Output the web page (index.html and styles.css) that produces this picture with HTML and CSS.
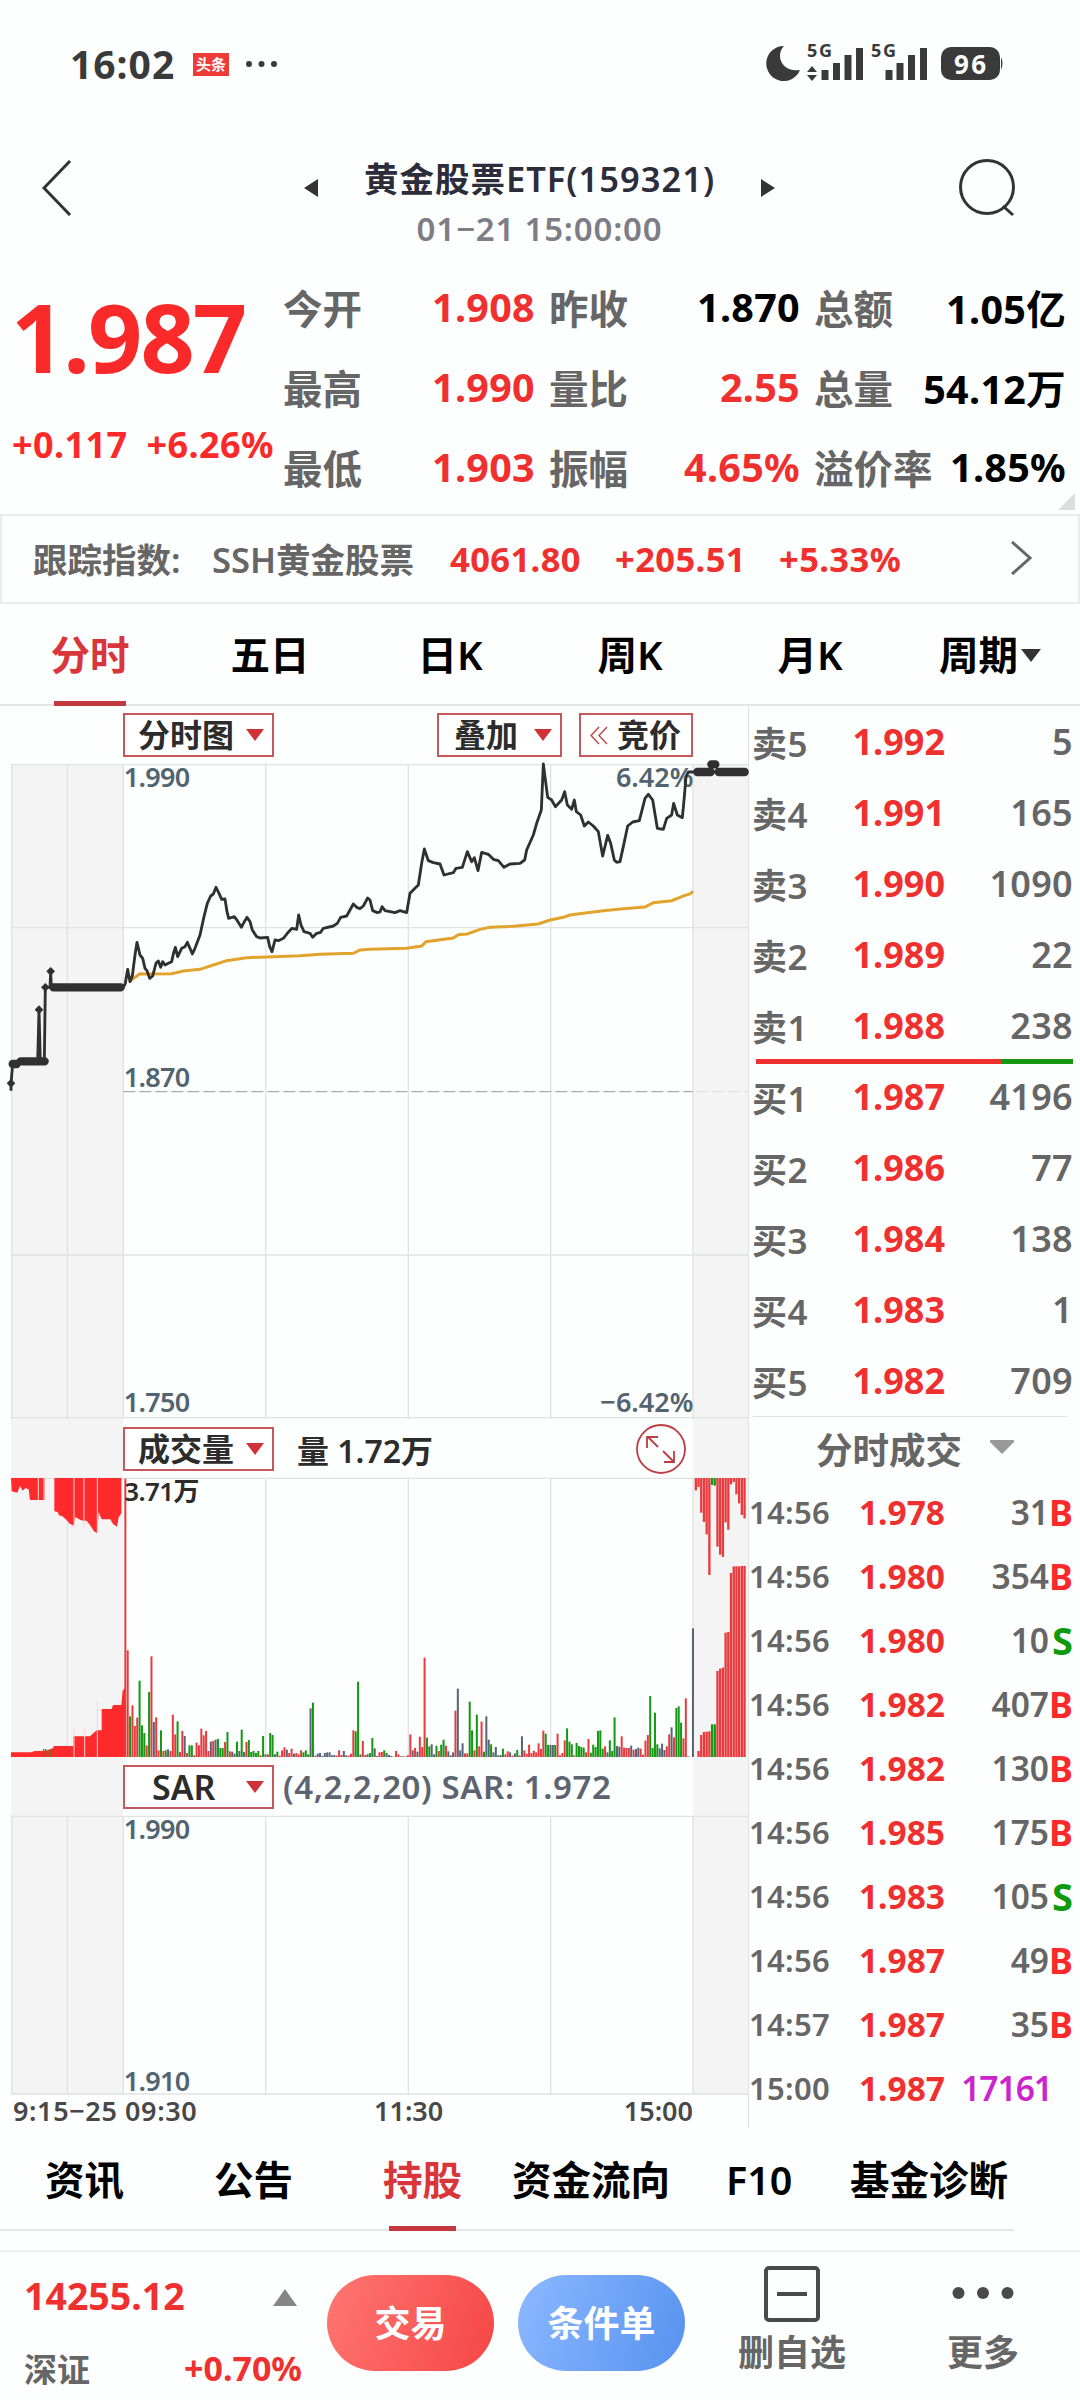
FILE: index.html
```html
<!doctype html>
<html lang="zh">
<head>
	<meta charset="UTF-8">
	<meta name="viewport" content="width=device-width, initial-scale=1.0">
	<title>黄金股票ETF(159321)</title>
	<link rel="stylesheet" href="styles.css">
</head>
<body>
<div class="status">
	<span class="time">16:02</span>
	<span class="app">头条</span>
	<svg class="more" width="32" height="8" viewBox="0 0 32 8"><circle cx="3" cy="4" r="3"/><circle cx="15.500" cy="4" r="3"/><circle cx="28" cy="4" r="3"/></svg>
	<svg class="sys" width="238" height="46" viewBox="766 36 238 46">
		<path d="M785 46a17.500 17.500 0 1 0 16 24c-11 2-20-5-20-14 0-4 1-7 4-10z"/>
		<text x="808" y="57" textLength="25">5G</text>
		<text x="872" y="57" textLength="25">5G</text>
		<path d="M813 66l5 6h-10zM813 81l5-6h-10z"/>
		<path class="bar" d="M826 80V70M837.500 80V63M849 80V55M860.500 80V48M890 80V70M901 80V63M912.500 80V55M924.500 80V48"/>
		<rect x="942" y="47" width="59" height="33" rx="10"/>
		<path d="M1002 57q3 6 0 13z"/>
		<text class="batt" x="955" y="73.500" textLength="32">96</text>
	</svg>
</div>

<div class="nav">
	<svg width="30" height="56" viewBox="0 0 30 56"><path d="M28 1L2 28l26 27"/></svg>
	<div class="title">
		<svg class="tri" width="14" height="18"><path d="M14 0v18L0 9z"/></svg>
		<div class="name">
			<h1>黄金股票ETF(159321)</h1>
			<p>01−21 15:00:00</p>
		</div>
		<svg class="tri" width="14" height="18"><path d="M0 0v18l14-9z"/></svg>
	</div>
	<svg width="58" height="58" viewBox="0 0 58 58"><circle cx="29" cy="28" r="26.500"/><path d="M45 47l10 9"/></svg>
</div>

<div class="quote">
	<div class="now">
		<p class="big">1.987</p>
		<p class="chg"><span>+0.117</span><span>+6.26%</span></p>
	</div>
	<div class="info">
		<div><b>今开</b><i class="red">1.908</i></div>
		<div><b>昨收</b><i>1.870</i></div>
		<div><b>总额</b><i>1.05亿</i></div>
		<div><b>最高</b><i class="red">1.990</i></div>
		<div><b>量比</b><i class="red">2.55</i></div>
		<div><b>总量</b><i>54.12万</i></div>
		<div><b>最低</b><i class="red">1.903</i></div>
		<div><b>振幅</b><i class="red">4.65%</i></div>
		<div><b>溢价率</b><i>1.85%</i></div>
	</div>
	<svg class="corner" width="17" height="17"><path d="M17 0v17H0z"/></svg>
</div>

<div class="index">
	<span class="lab">跟踪指数:</span>
	<span class="idx">SSH黄金股票</span>
	<span class="red v1">4061.80</span>
	<span class="red v2">+205.51</span>
	<span class="red v3">+5.33%</span>
	<svg width="22" height="34" viewBox="0 0 22 34"><path d="M2 1l18 16L2 33"/></svg>
</div>

<div class="tabs">
	<span class="on">分时</span>
	<span>五日</span>
	<span>日K</span>
	<span>周K</span>
	<span>月K</span>
	<span>周期<svg width="20" height="13"><path d="M0 0h20L10 13z"/></svg></span>
</div>

<div class="main">
	<div class="charts">
		<div class="bar top">
			<div class="btn w1">分时图<em></em></div>
			<div class="btn w2">叠加<em></em></div>
			<div class="btn w3"><svg width="18" height="19" viewBox="0 0 18 19"><path d="M9 1L1 9.500 9 18M17 1L9 9.500 17 18"/></svg>竞价</div>
		</div>
		<svg class="panel" id="price" width="738" height="655" viewBox="33 192 2214 1965">
			<path class="shade" d="M33 192h336v1965H33zM2079 192h165v1965h-165z"/>
			<path class="grid" d="M33 194h2211M33 683h2211M33 1665h2211M33 2153h2211M35 192v1965M202 192v1965M370 192v1965M797 192v1965M1225 192v1965M1652 192v1965M2079 192v1965"/>
			<path class="dash" d="M370 1175h1709"/>
			<path class="dash pale" d="M2090 1175h154"/>
			<text x="371" y="261">1.990</text>
			<text x="2080" y="261" class="end">6.42%</text>
			<text x="371" y="1161">1.870</text>
			<text x="371" y="2136">1.750</text>
			<text x="2080" y="2136" class="end">−6.42%</text>
			<polyline class="avg" points="390,842 405,832 420,821 440,822 515,821 550,813 600,808 640,795 680,782 740,773 820,770 900,767 960,763 1060,760 1080,750 1110,748 1220,745 1265,738 1278,725 1360,714 1375,704 1402,702 1440,688 1470,682 1540,679 1615,672 1650,660 1690,652 1710,645 1750,640 1810,632 1870,626 1935,621 1960,608 2015,602 2055,586 2070,582 2079,574"/>
			<polyline class="line" points="33,1172 33,1150 38,1092 50,1092 58,1084 113,1084 117,930 121,1084 133,1084 136,862 150,862 152,815 154,862 370,862 376,850 383,808 390,845 397,828 405,765 411,727 420,765 428,775 435,805 441,812 449,835 458,828 468,790 475,783 482,802 488,785 495,795 505,790 515,785 520,762 526,742 533,770 545,745 555,740 562,727 570,745 577,762 585,745 600,705 612,650 622,610 632,588 640,582 648,562 657,580 665,598 675,597 681,635 686,655 703,650 712,662 724,682 733,665 741,652 750,665 757,690 770,710 780,714 803,712 809,740 816,755 825,720 835,722 850,715 862,700 876,685 890,688 896,645 903,675 912,695 930,700 938,712 950,700 962,697 970,685 1000,678 1012,670 1022,652 1040,648 1060,612 1070,622 1080,626 1090,618 1103,594 1110,600 1118,632 1132,638 1140,636 1146,620 1155,632 1170,635 1185,638 1200,632 1220,638 1230,580 1245,565 1255,555 1265,490 1273,447 1285,482 1300,488 1320,492 1332,525 1360,518 1368,505 1387,502 1402,455 1415,485 1423,473 1434,512 1445,457 1465,463 1480,478 1495,482 1512,502 1530,492 1560,490 1574,480 1580,450 1600,405 1610,370 1624,330 1630,192 1643,292 1655,300 1666,320 1685,300 1694,275 1702,315 1715,328 1723,300 1729,335 1742,345 1753,378 1765,366 1780,378 1795,395 1808,468 1823,406 1832,430 1843,480 1850,487 1860,485 1872,430 1883,378 1898,366 1918,362 1935,295 1945,283 1958,300 1972,385 1990,388 2000,355 2015,345 2021,310 2032,345 2047,353 2053,290 2058,230 2065,216 2090,216"/>
			<path class="thick" d="M38 1092h12M62 1084h72M160 862h202M2092 216h40M2156 216h78M2134 193h12"/>
			<path class="dot" d="M33 1137l13 13-13 13-13-13zM117 916l13 13-13 13-13-13zM152 801l13 13-13 13-13-13zM136 849l13 13-13 13-13-13z"/>
		</svg>
		<div class="bar">
			<div class="btn w1">成交量<em></em></div>
			<span class="vol">量 1.72万</span>
			<svg class="zoom" width="50" height="50" viewBox="0 0 50 50"><circle cx="25" cy="25" r="24"/><path d="M22 23L12 13M11 24V13h11M27 27l11 11M28 38h10V27"/></svg>
		</div>
		<svg class="panel" id="volume" width="738" height="279" viewBox="33 0 2214 837">
			<path class="shade" d="M33 0h336v837H33zM2079 0h165v837h-165z"/>
			<path class="grid" d="M33 1h2211M202 0v837M797 0v837M1225 0v837M1652 0v837M2079 0v837"/>
			<path class="pre" d="M33 0h101v66h-44l-4-32-10-4-8 8-8-14-8 20-17-4zM163 0h201v106l-8 12-5 28-12-8-8-14-26 0-9-22-4 64-10-6-10-16-12-16h-10l-10-3-14-8-5 26-12-6-10-12-12-10-10-3-4-10-10-2z"/>
			<path class="pre" d="M33 837v-14h60l12-4h30l25-9 0-6h60v-29h50l8-8 12-10h15v-64h30l4-12h25l4-44 5-4 3-8v212z"/>
			<path class="gap" d="M115 0v70M132 0v70M222 0v150M252 0v150M292 0v165M222 750v87M254 750v87M292 670v167"/>
			<path class="pregreen" d="M131 813v24M137 813v24M152 813v24"/>
			<g id="bars"></g>
			<text x="373" y="68" class="dark">3.71万</text>
		</svg>
		<div class="bar">
			<div class="btn w1 sar">SAR<em></em></div>
			<span class="sarv">(4,2,2,20) SAR: 1.972</span>
		</div>
		<svg class="panel" width="738" height="279" viewBox="33 0 2214 837">
			<path class="shade" d="M33 0h336v837H33zM2079 0h165v837h-165z"/>
			<path class="grid" d="M33 1h2211M33 834h2211M35 0v837M202 0v837M370 0v837M797 0v837M1225 0v837M1652 0v837M2079 0v837"/>
			<text x="371" y="68">1.990</text>
			<text x="371" y="824">1.910</text>
		</svg>
		<div class="axis">
			<span>9:15−25 09:30</span>
			<span>11:30</span>
			<span>15:00</span>
		</div>
	</div>

	<div class="side">
		<div class="book" id="sell"></div>
		<div class="ratio"><div></div></div>
		<div class="book" id="buy"></div>
		<div class="dealhead">分时成交<svg width="24" height="14"><path d="M0 0h24v2L12 14 0 2z"/></svg></div>
		<div class="deals" id="deals"></div>
	</div>
</div>

<div class="subtabs">
	<span class="s1">资讯</span>
	<span class="s2">公告</span>
	<span class="s3 on">持股</span>
	<span class="s4">资金流向</span>
	<span class="s5">F10</span>
	<span class="s6">基金诊断</span>
</div>

<div class="foot">
	<div class="market">
		<div><span class="red pt">14255.12</span><svg width="24" height="17"><path d="M12 0l12 17H0z"/></svg></div>
		<div><span class="city">深证</span><span class="red pct">+0.70%</span></div>
	</div>
	<div class="pill trade">交易</div>
	<div class="pill cond">条件单</div>
	<div class="act">
		<svg width="56" height="56" viewBox="0 0 56 56"><rect x="2" y="2" width="52" height="52" rx="3"/><path d="M13 28h30"/></svg>
		<span>删自选</span>
	</div>
	<div class="act last">
		<svg width="62" height="56" viewBox="0 0 62 56"><circle cx="6.500" cy="27" r="6"/><circle cx="31" cy="27" r="6"/><circle cx="55.500" cy="27" r="6"/></svg>
		<span>更多</span>
	</div>
</div>

<script>
	// 每分钟成交量: 颜色 + 高度
	const vol = `r835 r320 g122 r155 r93 r118 g229 g95 g72 r35 g195 r302 b105 r119 r20 g80 r18 g20 b23 r18
	r127 r68 g107 r15 r78 b63 r12 g35 g35 r5 r43 r35 r85 r65 r78 r18 b46 r48 b52 g54
	g27 g27 r45 g75 r17 b16 b10 g46 b18 g82 b15 r45 g51 g15 g18 g12 g18 r5 g63 b8
	r8 g72 g66 b8 g16 r4 r20 r29 b22 r12 r25 b10 r12 r8 r20 g14 g20 g8 b146 g163
	r4 b10 b12 b3 b12 b14 b14 b5 b6 r4 r20 r6 b18 b5 r4 r10 r80 g77 g226 b8
	r48 r6 b8 g12 g57 b26 r3 r14 r15 g20 b12 b6 b3 r1 r18 r8 b2 b2 r2 r5
	r68 b20 r27 b16 r61 r30 r298 g58 g32 b38 b8 g34 r18 g37 g52 r34 b17 b5 b14 r139
	b205 b20 b41 r11 r11 g166 g80 r20 g127 r32 r106 g16 b122 b52 g38 b14 b30 b5 b6 g25
	r8 r17 b14 r4 b11 g21 r5 b62 r20 r10 r37 r12 r19 r14 r41 r24 r79 g70 g36 b36
	b36 g36 r70 r5 r12 r50 g86 g46 g38 r5 g42 g33 g30 g28 r14 r54 g13 g37 g30 g78
	g80 g25 r32 b14 g50 g18 g119 b33 b31 r62 r28 r27 r27 b34 r22 b24 b28 r25 r7 r49
	r66 g183 g27 g133 g38 b26 b40 b21 r32 r68 b89 r59 g147 g152 g103 r56 r176 b2 b0 b386`.split(/\s+/)
	// 收盘竞价
	const down = "r37 r27 r104 r132 r169 r291 g21 g23 r206 r230 r237 r133 r155 r19 r12 r49 r76 r111 r121".split(" ")
	const up = "r0 r18 r66 r75 r76 r77 g98 g98 r258 r265 r268 r373 r375 r552 r572 r572 r572 r573 r573".split(" ")

	function rect(v, x, fromTop, w) {
		let h = Number(v.slice(1))
		let y = fromTop ? 0 : 837 - h
		return `<rect class="${v[0]}" x="${x}" y="${y}" width="${w}" height="${h}"/>`
	}
	let out = ""
	vol.forEach((v, i) => out += rect(v, 373 + i * 7.125, false, 6))
	down.forEach((v, i) => out += rect(v, 2084 + i * 8.12, true, 7))
	up.forEach((v, i) => out += rect(v, 2084 + i * 8.12, false, 7))
	document.getElementById("bars").innerHTML = out

	function rows(id, list) {
		document.getElementById(id).innerHTML = list.map(r =>
			`<div><span>${r[0]}</span><span class="red">${r[1]}</span><span class="${r[4] || ""}">${r[2]}</span>${r[3] !== undefined ? `<b class="${r[3]}">${r[3]}</b>` : ""}</div>`
		).join("")
	}
	rows("sell", [["卖5", "1.992", 5], ["卖4", "1.991", 165], ["卖3", "1.990", 1090], ["卖2", "1.989", 22], ["卖1", "1.988", 238]])
	rows("buy", [["买1", "1.987", 4196], ["买2", "1.986", 77], ["买3", "1.984", 138], ["买4", "1.983", 1], ["买5", "1.982", 709]])
	rows("deals", [
		["14:56", "1.978", 31, "B"],
		["14:56", "1.980", 354, "B"],
		["14:56", "1.980", 10, "S"],
		["14:56", "1.982", 407, "B"],
		["14:56", "1.982", 130, "B"],
		["14:56", "1.985", 175, "B"],
		["14:56", "1.983", 105, "S"],
		["14:56", "1.987", 49, "B"],
		["14:57", "1.987", 35, "B"],
		["15:00", "1.987", 17161, "", "purple"]
	])
</script>
</body>
</html>
```
FILE: styles.css
```css
*{
	box-sizing: border-box;
	margin: 0;
	padding: 0;
}
body{
	width: 1080px;
	height: 2400px;
	overflow: hidden;
	background: #fdfefe;
	font-family: "Noto Sans", "Noto Sans CJK SC", sans-serif;
	font-weight: 600;
	color: #000;
	white-space: nowrap;
}
svg{
	flex: none;
}
i{
	font-style: normal;
}
.red{
	color: #f0302f;
	font-weight: 700;
}
.status{
	height: 112px;
	padding: 18px 77px 0 70px;
	display: flex;
	align-items: center;
	color: #3a3a3a;
}
.time{
	width: 123px;
	margin-top: -3px;
	font-size: 39px;
	font-weight: 700;
	letter-spacing: 1px;
}
.app{
	width: 36px;
	height: 23px;
	margin-right: 17px;
	margin-top: -1px;
	background: #ee3b38;
	color: #fff;
	font-size: 15px;
	line-height: 22px;
	text-align: center;
}
.more{
	margin-top: -2px;
	fill: #3a3a3a;
}
.sys{
	margin-left: auto;
	margin-top: -12px;
	overflow: visible;
	fill: #3a3a3a;
	font-size: 18px;
	font-weight: 700;
}
.sys .bar{
	stroke: #3a3a3a;
	stroke-width: 7;
}
.sys .batt{
	fill: #fff;
	font-size: 26px;
}
.nav{
	height: 153px;
	padding: 0 64px 0 42px;
	display: flex;
	justify-content: space-between;
	align-items: center;
}
.nav svg{
	fill: none;
	stroke: #333;
	stroke-width: 3;
	margin-top: -1px;
}
.nav .tri{
	fill: #333;
	stroke: none;
}
.title{
	width: 471px;
	margin-left: 49px;
	display: flex;
	justify-content: space-between;
	align-items: center;
}
.name{
	padding-top: 30px;
	text-align: center;
}
.name h1{
	font-size: 34.5px;
	line-height: 50px;
	font-weight: 600;
	letter-spacing: 1px;
	color: #2c2c3a;
}
.name p{
	font-size: 33px;
	line-height: 50px;
	letter-spacing: .8px;
	color: #7d7d86;
}
.quote{
	height: 249px;
	display: flex;
	position: relative;
}
.now{
	width: 284px;
	color: #fb2a2a;
}
.big{
	height: 144px;
	padding-left: 11px;
	font-size: 95px;
	line-height: 143px;
	letter-spacing: -2px;
	font-weight: 700;
}
.chg{
	padding-left: 12px;
	font-size: 36px;
	font-weight: 700;
	line-height: 71px;
	letter-spacing: .4px;
	display: flex;
	gap: 19px;
}
.info{
	width: 782px;
	height: 242px;
	padding-top: 2px;
	display: grid;
	grid-template-columns: 251px 250px 251px;
	column-gap: 15px;
	grid-auto-rows: 80px;
}
.info div{
	display: flex;
	justify-content: space-between;
	align-items: center;
	font-size: 39.5px;
}
.info b{
	margin-left: -1px;
	font-weight: 600;
	color: #666;
}
.info i{
	font-weight: 700;
	letter-spacing: .3px;
}
.corner{
	position: absolute;
	right: 5px;
	bottom: 4px;
	fill: #ddd;
}
.index{
	height: 90px;
	padding: 0 0 2px 31px;
	border: 2px solid #ebecec;
	display: flex;
	align-items: center;
	font-size: 34.5px;
	color: #666;
}
.lab{
	width: 179px;
}
.idx{
	width: 238px;
}
.index .red{
	letter-spacing: .4px;
}
.v1{
	width: 165px;
}
.v2{
	width: 164px;
}
.v3{
	width: 231px;
}
.index svg{
	fill: none;
	stroke: #666;
	stroke-width: 3;
}
.tabs{
	height: 102px;
	display: grid;
	grid-template-columns: repeat(6, 180px);
	border-bottom: 2px solid #e4e6e6;
	font-size: 39.5px;
	line-height: 104px;
}
.tabs span{
	height: 100px;
	padding-top: 2px;
	display: flex;
	justify-content: center;
	align-items: center;
}
.tabs svg{
	margin-left: 3px;
	fill: #333;
}
.on{
	color: #d8363a;
	position: relative;
}
.on::after{
	content: "";
	position: absolute;
	left: 50%;
	bottom: -2px;
	width: 72px;
	height: 5px;
	margin-left: -36px;
	background: #c4393e;
}
.main{
	height: 1422px;
	display: flex;
}
.charts{
	width: 749px;
	padding-left: 11px;
	border-right: 1px solid #dfe1e2;
}
.bar{
	height: 59px;
	padding-left: 112px;
	display: flex;
	align-items: center;
	background: linear-gradient(to right, #f4f4f4 112px, #fff0 112px, #fff0 682px, #f4f4f4 682px);
}
.top{
	height: 58px;
	background: none;
}
.btn{
	height: 44px;
	border: 2px solid #c4585b;
	background: #fff;
	font-size: 32px;
	line-height: 40px;
	color: #2c2c2c;
	display: flex;
	align-items: center;
}
.btn em{
	margin-left: auto;
	margin-right: 8px;
	border: 9px solid transparent;
	border-top: 12px solid #cf3338;
	border-bottom: 0;
}
.w1{
	width: 151px;
	padding-left: 13px;
}
.w2{
	width: 125px;
	margin-left: 163px;
	padding-left: 15px;
}
.w3{
	width: 114px;
	margin-left: 17px;
	padding-left: 9px;
	gap: 9px;
}
.w3 svg{
	fill: none;
	stroke: #c2494d;
	stroke-width: 1.5;
}
.sar{
	padding-left: 27px;
	font-size: 34px;
}
.vol{
	width: 337px;
	margin-left: 23px;
	font-size: 32px;
	color: #2c2c2c;
}
.zoom{
	margin-left: 2px;
	fill: none;
	stroke: #bb3d42;
	stroke-width: 1.8;
}
.sarv{
	margin-left: 9px;
	font-size: 33px;
	letter-spacing: .6px;
	color: #5c6470;
}
.panel{
	display: block;
	overflow: visible;
}
.panel text{
	font-size: 81px;
	letter-spacing: -2px;
	fill: #52646f;
}
.panel .end{
	text-anchor: end;
	letter-spacing: 0;
}
.panel .dark{
	fill: #2c2c2c;
	font-size: 78px;
}
.shade{
	fill: #f4f4f4;
}
.grid{
	fill: none;
	stroke: #e1e2e3;
	stroke-width: 4;
}
.dash{
	fill: none;
	stroke: #999;
	stroke-width: 3;
	stroke-dasharray: 36 12;
}
.pale{
	stroke: #ddd;
}
.avg{
	fill: none;
	stroke: #e0a42c;
	stroke-width: 9;
}
.line{
	fill: none;
	stroke: #303030;
	stroke-width: 8.5;
	stroke-linejoin: round;
}
.thick{
	fill: none;
	stroke: #303030;
	stroke-width: 25;
	stroke-linecap: round;
}
.dot{
	fill: #303030;
}
.pre{
	fill: #ff2a2c;
}
.gap{
	stroke: #fbd5d5;
	stroke-width: 3;
}
.pregreen{
	stroke: #7a6a10;
	stroke-width: 4;
}
rect.r{
	fill: #e93a3d;
}
rect.g{
	fill: #129812;
}
rect.b{
	fill: #566475;
}
.axis{
	width: 682px;
	padding-left: 2px;
	display: grid;
	grid-template-columns: 330px 130px 220px;
	font-size: 27px;
	line-height: 31px;
	color: #484848;
}
.axis span:nth-child(1){
	letter-spacing: .6px;
}
.axis span:nth-child(2){
	padding-left: 31px;
}
.axis span:nth-child(3){
	text-align: right;
}
.side{
	width: 325px;
	padding-left: 4px;
}
.book div{
	height: 71px;
	display: grid;
	grid-template-columns: 80px 112px 128px;
	align-items: center;
	text-align: right;
	font-size: 36px;
	color: #666;
}
.book span:first-child, .deals span:first-child{
	text-align: left;
}
#sell{
	height: 353px;
}
#buy{
	height: 353px;
	margin-right: 7px;
	border-bottom: 1px solid #dfe1e2;
}
#buy div{
	position: relative;
	top: -3px;
}
.book span:first-child{
	margin-left: -1px;
	font-size: 35px;
	letter-spacing: .6px;
}
.book span:last-child{
	letter-spacing: .3px;
}
.ratio{
	width: 317px;
	height: 5px;
	margin-left: 3px;
	background: #129812;
}
.ratio div{
	width: 245px;
	height: 5px;
	background: #f0302f;
}
.dealhead{
	height: 63px;
	padding-left: 63px;
	display: flex;
	align-items: center;
	font-size: 36.5px;
	color: #666;
}
.dealhead svg{
	margin-left: 28px;
	margin-top: -4px;
	fill: #999;
}
.deals div{
	height: 64px;
	display: grid;
	grid-template-columns: 80px 112px 104px 24px;
	align-items: center;
	text-align: right;
	font-size: 33.5px;
	color: #666;
}
.deals span:first-child{
	margin-left: -4px;
	font-size: 31px;
	letter-spacing: .3px;
}
.deals b{
	font-size: 36px;
	font-weight: 700;
}
.B{
	color: #fb2a2a;
}
.deals .S{
	font-size: 38px;
	line-height: 50px;
	color: #0d9a0d;
}
.deals .purple{
	margin-right: -3px;
	letter-spacing: -1px;
	color: #cc24cc;
}
.subtabs{
	width: 1014px;
	height: 103px;
	padding-left: 45px;
	display: flex;
	border-bottom: 2px solid #e4e6e6;
	font-size: 39.5px;
	line-height: 105px;
}
.s1, .s2{
	width: 169px;
}
.s3{
	width: 79px;
	margin-right: 50px;
}
.subtabs .on::after{
	width: 67px;
	margin-left: -34px;
}
.s4{
	width: 214px;
}
.s5{
	width: 124px;
}
.foot{
	height: 150px;
	margin-top: 19px;
	border-top: 2px solid #eeefef;
	display: flex;
}
.market{
	width: 302px;
	margin-right: 25px;
	padding-left: 24px;
}
.market div{
	height: 80px;
	display: flex;
	justify-content: space-between;
	align-items: center;
}
.market div:first-child{
	padding: 11px 5px 0 0;
	height: 76px;
}
.market svg{
	margin-top: 3px;
	fill: #858585;
}
.pt{
	font-size: 37.5px;
}
.city{
	font-size: 33px;
	color: #666;
}
.pct{
	font-size: 34px;
}
.pill{
	width: 167px;
	height: 96px;
	margin: 23px 24px 0 0;
	border-radius: 48px;
	font-size: 36px;
	line-height: 97px;
	text-align: center;
	color: #fff;
}
.trade{
	background: linear-gradient(110deg, #ff7672, #f54645);
}
.cond{
	background: linear-gradient(110deg, #8cb8ff, #5792ef);
}
.act{
	width: 110px;
	margin-left: 28px;
	padding-top: 14px;
	display: flex;
	flex-direction: column;
	align-items: center;
	font-size: 36px;
	line-height: 61px;
	color: #666;
}
.act svg{
	fill: none;
	stroke: #4a4a4a;
	stroke-width: 4;
}
.last{
	width: 72px;
	margin-left: 100px;
}
.last svg{
	fill: #4a4a4a;
	stroke: none;
}
```
